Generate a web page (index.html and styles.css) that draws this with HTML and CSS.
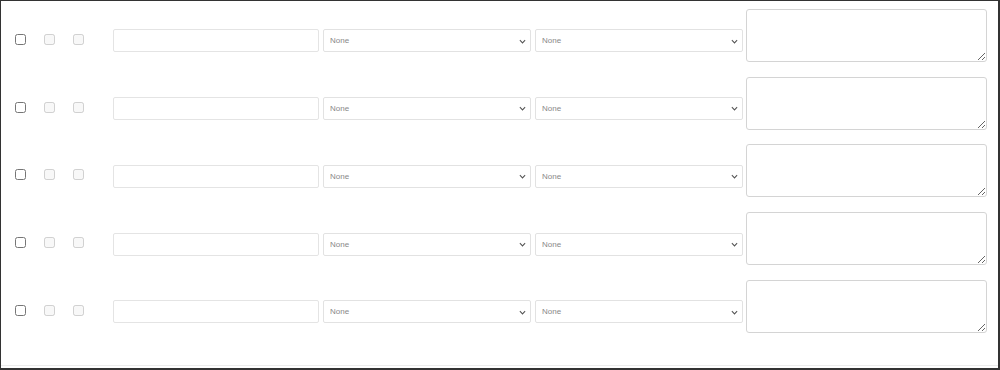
FILE: index.html
```html
<!DOCTYPE html>
<html lang="en">
<head>
  <meta charset="UTF-8">
  <meta name="viewport" content="width=device-width, initial-scale=1.0">
  <title>Rows</title>
  <link rel="stylesheet" href="styles.css">
</head>
<body>

  <div class="frame">
    <div class="rows">

      <div class="row">
        <span class="cell"><input type="checkbox"></span>
        <span class="cell"><input type="checkbox" disabled></span>
        <span class="cell"><input type="checkbox" disabled></span>
        <input class="name" type="text">
        <select class="pick"><option>None</option></select>
        <select class="pick"><option>None</option></select>
        <textarea class="note"></textarea>
      </div>

      <div class="row">
        <span class="cell"><input type="checkbox"></span>
        <span class="cell"><input type="checkbox" disabled></span>
        <span class="cell"><input type="checkbox" disabled></span>
        <input class="name" type="text">
        <select class="pick"><option>None</option></select>
        <select class="pick"><option>None</option></select>
        <textarea class="note"></textarea>
      </div>

      <div class="row">
        <span class="cell"><input type="checkbox"></span>
        <span class="cell"><input type="checkbox" disabled></span>
        <span class="cell"><input type="checkbox" disabled></span>
        <input class="name" type="text">
        <select class="pick"><option>None</option></select>
        <select class="pick"><option>None</option></select>
        <textarea class="note"></textarea>
      </div>

      <div class="row">
        <span class="cell"><input type="checkbox"></span>
        <span class="cell"><input type="checkbox" disabled></span>
        <span class="cell"><input type="checkbox" disabled></span>
        <input class="name" type="text">
        <select class="pick"><option>None</option></select>
        <select class="pick"><option>None</option></select>
        <textarea class="note"></textarea>
      </div>

      <div class="row">
        <span class="cell"><input type="checkbox"></span>
        <span class="cell"><input type="checkbox" disabled></span>
        <span class="cell"><input type="checkbox" disabled></span>
        <input class="name" type="text">
        <select class="pick"><option>None</option></select>
        <select class="pick"><option>None</option></select>
        <textarea class="note"></textarea>
      </div>

    </div>
  </div>

</body>
</html>
```

FILE: styles.css
```css
* {
  margin: 0;
  padding: 0;
  box-sizing: border-box;
}

body {
  font-family: "Liberation Sans", Arial, sans-serif;
  background: #fff;
}

.frame {
  width: 1000px;
  height: 370px;
  border-style: solid;
  border-color: #333;
  border-width: 1px 2px 2px 1px;
  padding-top: 4.5px;
  overflow: hidden;
}

.rows {
  padding-left: 5px;
  padding-bottom: 20.5px;
  border-bottom: 1px solid #ececec;
}

.row {
  display: flex;
  align-items: center;
  height: 67.75px;
}

.cell {
  width: 29px;
  display: flex;
  justify-content: center;
  align-items: center;
}

.cell input {
  width: 11px;
  height: 11px;
  margin: 0;
}

.name {
  width: 206px;
  height: 23px;
  margin: 3px 0 0 20px;
  border: 1px solid #e4e4e4;
  border-radius: 2px;
  outline: none;
}

.pick {
  width: 208px;
  height: 23px;
  margin: 3px 0 0 4px;
  padding-left: 6px;
  border: 1px solid #e2e2e2;
  border-radius: 2px;
  font-family: "Liberation Sans", Arial, sans-serif;
  font-size: 8px;
  color: #888;
  background: #fff url("data:image/svg+xml,%3Csvg xmlns='http://www.w3.org/2000/svg' viewBox='0 0 8 5'%3E%3Cpath d='M1 1l3 3 3-3' fill='none' stroke='%23555' stroke-width='1.2'/%3E%3C/svg%3E") no-repeat right 4px center / 7px 4.5px;
  appearance: none;
  outline: none;
}

.note {
  width: 241px;
  height: 53px;
  margin: 0 0 8px 3px;
  border: 1px solid #d4d4d4;
  border-radius: 3px;
  resize: both;
  outline: none;
}
```
